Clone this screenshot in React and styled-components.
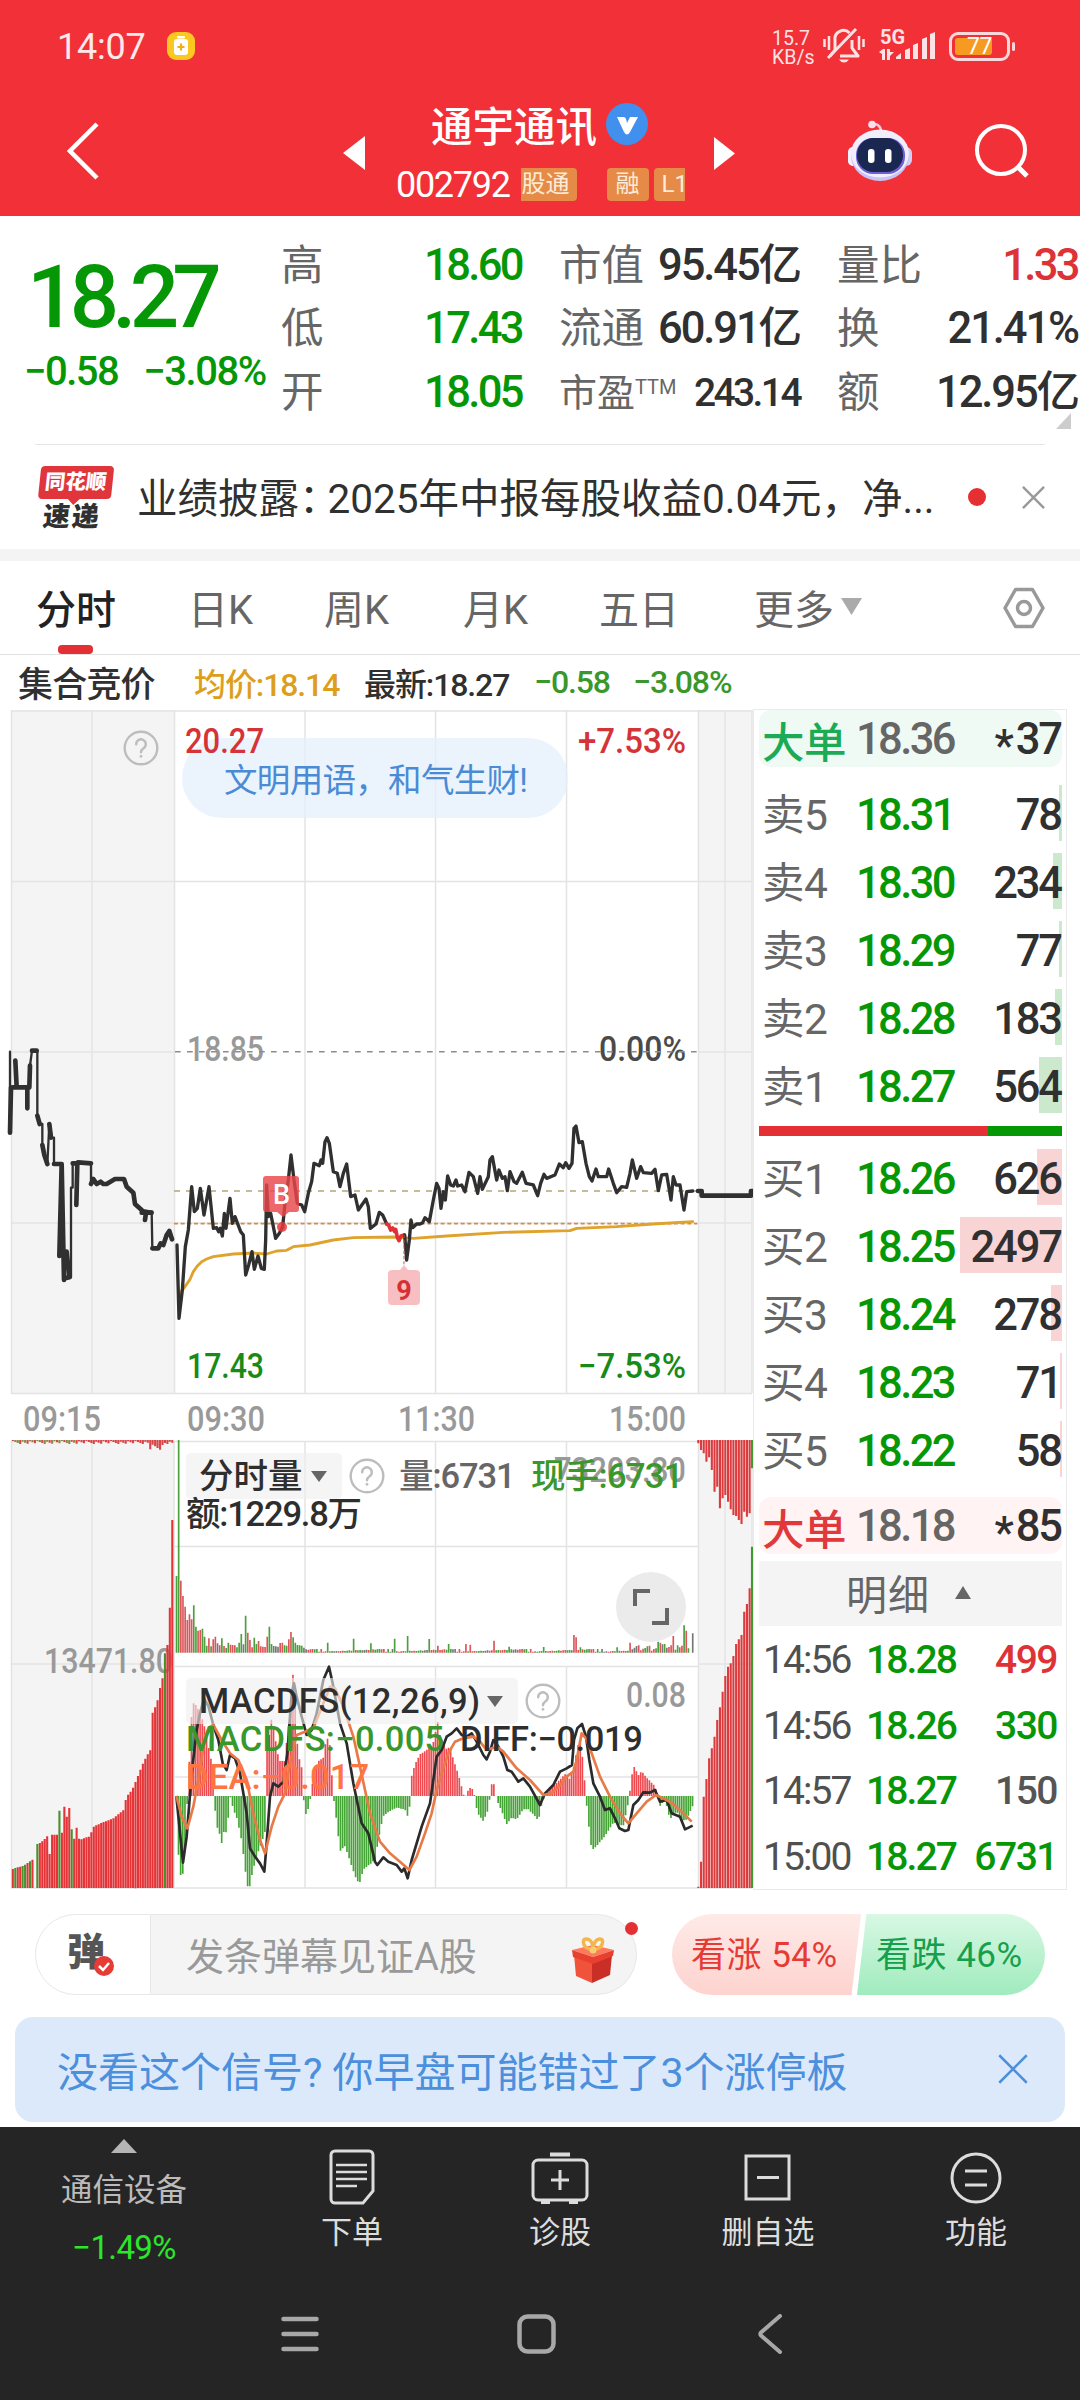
import React from "react";
import styled, { createGlobalStyle } from "styled-components";

const GREEN = "#069706";
const RED = "#dd3236";

const GlobalStyle = createGlobalStyle`
  body {
    margin: 0;
    background-color: white;
  }
  * {
    box-sizing: border-box;
  }
  svg {
    display: block;
    flex-shrink: 0;
  }
`;

/* ---------- data ---------- */

const quotes = [
  [
    { label: "高", value: "18.60", color: GREEN },
    { label: "低", value: "17.43", color: GREEN },
    { label: "开", value: "18.05", color: GREEN },
  ],
  [
    { label: "市值", value: "95.45亿" },
    { label: "流通", value: "60.91亿" },
    { label: "市盈", sup: "TTM", value: "243.14" },
  ],
  [
    { label: "量比", value: "1.33", color: RED },
    { label: "换", value: "21.41%" },
    { label: "额", value: "12.95亿" },
  ],
];

const sells = [
  { label: "卖5", price: "18.31", qty: "78", bar: 3 },
  { label: "卖4", price: "18.30", qty: "234", bar: 9 },
  { label: "卖3", price: "18.29", qty: "77", bar: 3 },
  { label: "卖2", price: "18.28", qty: "183", bar: 7 },
  { label: "卖1", price: "18.27", qty: "564", bar: 23 },
];

const buys = [
  { label: "买1", price: "18.26", qty: "626", bar: 25 },
  { label: "买2", price: "18.25", qty: "2497", bar: 102 },
  { label: "买3", price: "18.24", qty: "278", bar: 11 },
  { label: "买4", price: "18.23", qty: "71", bar: 2 },
  { label: "买5", price: "18.22", qty: "58", bar: 2 },
];

const deals = [
  { time: "14:56", price: "18.28", qty: "499", color: RED },
  { time: "14:56", price: "18.26", qty: "330", color: GREEN },
  { time: "14:57", price: "18.27", qty: "150", color: "#555" },
  { time: "15:00", price: "18.27", qty: "6731", color: GREEN },
];

// chart series are kept in thirds of a pixel
const auctionThin =
  "M30 155V398M38 262H82M88 262L90 197L96 152H112V347L119 372H127V435L133 465L142 492L148 372L156 413H162V492H185M213 832V563H218V490H232M273 490V552M372 537L380 560L400 578L405 612L425 630L455 635L457 745";
const auctionThick =
  "M33 262L30 398M38 262H82V325M46 182L50 262M88 262L90 197M96 152H110M112 347L119 372M127 435L133 465L142 492M148 372L153 413M162 492H185L178 768M185 492L192 840M200 755L208 832L196 835M218 490H232L229 615M234 487L273 490M273 552L280 537L290 552L302 545L310 552H320L345 537H372L380 560L400 578L405 612L425 630M425 638H455M435 660L438 638M457 745H475L482 730L490 735L500 705L508 693L516 718";
const priceMorning =
  "531,735 537,955 547,870 556,740 565,690 575,560 583,635 592,625 601,565 612,645 627,560 640,685 650,683 656,695 661,685 667,708 673,640 678,685 690,595 697,670 705,650 722,695 730,705 737,825 746,795 756,755 763,808 774,768 784,805 793,808 797,720 800,555 805,650 812,640 827,715 838,700 848,680 855,610 865,540 873,465 882,540 892,610 905,615 914,635 925,580 935,545 942,490 958,497 963,480 968,490 975,425 981,413 988,430 1000,515 1012,520 1020,560 1030,520 1040,492 1052,590 1065,585 1075,630 1098,597 1105,620 1111,685 1128,672 1138,637 1148,645 1160,672";
const priceDrop = "1160,672 1166,676 1172,690 1178,684 1184,695 1187,688 1192,712 1197,722 1203,708 1212,705";
const priceAfternoon =
  "1214,705 1220,780 1228,720 1233,660 1238,683 1250,672 1260,672 1268,668 1275,653 1288,665 1300,600 1310,550 1317,565 1323,625 1330,575 1336,600 1343,528 1352,555 1360,558 1368,540 1373,558 1385,555 1395,575 1407,517 1420,530 1433,580 1440,530 1447,568 1465,530 1470,480 1477,470 1490,540 1497,510 1507,535 1515,530 1522,572 1530,515 1542,545 1550,550 1567,517 1578,550 1600,555 1613,587 1622,550 1632,523 1640,535 1665,525 1678,492 1690,503 1697,488 1707,505 1716,490 1722,385 1728,378 1737,428 1747,425 1758,490 1768,530 1776,543 1788,507 1795,530 1820,530 1826,507 1840,550 1850,578 1865,560 1880,562 1890,520 1897,480 1910,535 1922,500 1930,518 1955,520 1965,508 1975,572 1985,525 2000,523 2013,600 2020,530 2028,555 2040,555 2052,630 2060,575 2078,573";
const average =
  "540,880 555,860 570,838 580,815 592,798 605,785 620,777 640,770 700,762 760,759 800,762 830,753 860,751 880,740 930,735 1000,720 1060,713 1180,711 1240,715 1340,708 1510,697 1710,692 1730,685 1850,680 1960,672 2078,665";
const diffLine =
  "529,1128 549,1328 560,1250 575,1060 590,930 600,880 612,835 625,858 640,915 655,960 668,1030 680,1050 690,1005 705,1015 720,1060 740,1180 750,1285 765,1310 780,1330 793,1355 800,1270 810,1130 820,1090 835,1100 850,1085 862,1000 875,820 882,790 890,830 905,890 920,945 935,930 950,880 970,780 987,740 998,790 1020,910 1040,970 1060,1090 1085,1210 1105,1240 1125,1325 1132,1335 1150,1312 1165,1325 1190,1335 1205,1355 1213,1345 1223,1375 1235,1320 1265,1220 1290,1150 1310,1010 1325,990 1340,950 1355,940 1370,925 1385,945 1400,950 1415,940 1430,965 1450,1005 1460,1018 1470,995 1480,960 1495,980 1510,1010 1522,1050 1535,1055 1555,1085 1570,1075 1590,1100 1620,1155 1635,1120 1660,1095 1680,1055 1700,1045 1716,1035 1722,960 1732,925 1746,912 1758,950 1768,1020 1780,1090 1800,1130 1815,1170 1830,1165 1845,1195 1858,1225 1875,1233 1885,1230 1900,1155 1915,1140 1930,1117 1950,1118 1965,1110 1980,1145 2000,1140 2015,1180 2040,1190 2055,1228 2078,1217";
const deaLine =
  "529,1128 545,1190 562,1225 580,1160 600,1050 615,950 627,922 640,915 665,960 690,1000 715,1020 740,1080 760,1180 780,1260 795,1300 815,1220 835,1160 855,1120 870,1030 890,945 915,935 940,925 970,850 990,800 1005,805 1030,860 1060,950 1080,1040 1110,1180 1140,1265 1170,1300 1200,1325 1228,1350 1250,1310 1275,1240 1295,1180 1310,1110 1325,1060 1345,1000 1365,965 1390,955 1420,950 1440,965 1460,990 1490,980 1510,995 1550,1045 1590,1080 1630,1125 1655,1120 1680,1095 1700,1070 1720,1055 1730,1020 1745,940 1758,955 1775,1000 1800,1070 1830,1130 1860,1180 1885,1210 1910,1180 1940,1145 1968,1125 2000,1140 2020,1152 2045,1175 2075,1205";

const macd = [
  [529, 0], [536, -190], [543, -245], [550, -230], [556, -150], [562, -10], [568, 105], [575, 250], [582, 283],
  [600, 250], [612, 215], [625, 150], [635, 100], [640, 30], [642, -5], [650, -90], [658, -110], [666, -145],
  [672, -105], [680, -110], [686, -50], [690, 0], [700, -40], [712, -70], [725, -135], [738, -240], [744, -278],
  [750, -270], [758, -225], [770, -180], [785, -140], [797, -100], [799, 0], [800, 130], [815, 235], [822, 200],
  [832, 130], [840, 105], [855, 105], [862, 190], [870, 230], [879, 365], [886, 300], [893, 130], [905, 85],
  [907, 0], [912, -15], [918, -55], [926, -35], [932, -2], [936, 30], [945, 80], [955, 105], [970, 115],
  [980, 180], [990, 150], [995, 70], [1000, 0], [1008, -60], [1020, -165], [1035, -150], [1050, -195],
  [1065, -240], [1078, -265], [1090, -220], [1110, -205], [1125, -190], [1140, -105], [1150, -60], [1170, -45],
  [1190, -35], [1215, -40], [1222, -60], [1228, -45], [1231, 0], [1235, 60], [1245, 95], [1260, 125],
  [1275, 135], [1290, 145], [1305, 170], [1310, 240], [1320, 180], [1340, 140], [1350, 150], [1360, 110],
  [1375, 65], [1388, 15], [1393, -5], [1400, 5], [1407, 25], [1418, 20], [1424, 0], [1432, -50], [1450, -75],
  [1465, -40], [1470, 0], [1478, 55], [1485, 15], [1490, -10], [1505, -45], [1520, -85], [1535, -65],
  [1550, -70], [1570, -40], [1585, -40], [1605, -60], [1615, -75], [1625, -25], [1634, 0], [1650, 20],
  [1665, 35], [1680, 50], [1695, 65], [1710, 50], [1722, 90], [1733, 150], [1740, 165], [1750, 100],
  [1757, 0], [1762, -45], [1772, -145], [1780, -160], [1790, -150], [1815, -120], [1840, -80], [1870, -90],
  [1885, -20], [1889, 10], [1897, 70], [1903, 88], [1915, 62], [1925, 75], [1940, 55], [1965, 30], [1973, 0],
  [1980, -30], [1995, -10], [2010, -70], [2030, -45], [2045, -75], [2060, -70], [2078, -30],
];

const volumePeaks = {
  0: "g230", 1: "g638", 2: "r216", 3: "r170", 4: "r138", 5: "r98", 6: "r115", 7: "r100", 8: "g142", 9: "g78",
  10: "r66", 11: "r68", 12: "g72", 13: "g48", 15: "r43", 17: "r40", 18: "r48", 21: "g43", 29: "g30", 30: "g56",
  32: "g111", 33: "r60", 34: "r38", 36: "g45", 38: "r35", 42: "r48", 43: "g78", 49: "r30", 52: "r40", 53: "r62",
  54: "g46", 55: "g30", 70: "g30", 82: "g42", 90: "g28", 101: "g42", 107: "g50", 117: "g41", 121: "r21",
  126: "g26", 134: "r26", 136: "r24", 147: "r36", 154: "g18", 170: "g17", 184: "r53", 185: "r46", 187: "g16",
  204: "g16", 210: "r30", 223: "g33", 224: "r30", 226: "g26", 230: "r50", 232: "g22", 235: "g82", 236: "r66",
  239: "k58",
};

const auctionTotals = [
  [36, 1347], [70, 1337], [98, 1318], [101, 1404], [107, 1404], [111, 1272], [122, 1268], [130, 1260],
  [141, 1248], [148, 1303], [155, 1244], [170, 1244], [177, 1168], [184, 1245], [192, 1160], [200, 1192],
  [207, 1163], [214, 1227], [222, 1258], [229, 1222], [237, 1260], [270, 1248], [277, 1222], [300, 1210],
  [340, 1195], [370, 1170], [378, 1130], [395, 1110], [410, 1075], [430, 1025], [450, 990], [457, 878],
  [470, 850], [478, 808], [486, 780], [493, 703], [501, 677], [508, 582], [516, 296],
];

const closingTop = [10, 30, 40, 65, 52, 90, 155, 140, 205, 175, 165, 185, 208, 225, 228, 240, 252, 215, 230, 220];
const closingTotals = [
  1400, 1325, 1130, 1077, 1015, 985, 950, 900, 862, 815, 768, 740, 730, 708, 672, 658, 645, 575, 552, 505,
];

const interp = (points, x) => {
  for (let i = 1; i < points.length; i++) {
    if (x <= points[i][0]) {
      const [x0, y0] = points[i - 1];
      const [x1, y1] = points[i];
      return y0 + ((x - x0) / (x1 - x0)) * (y1 - y0);
    }
  }
  return points[points.length - 1][1];
};

const barPath = (bars) => bars.map(([x, y, h]) => `M${x} ${y}v${h}`).join("");

const volumeBars = { r: [], g: [], k: [] };
for (let i = 0; i < 240; i++) {
  if (i === 238) continue;
  const x = (529.5 + i * 6.48).toFixed(1);
  const noise = (i * 7919) % 97;
  let color = noise % 5 < 2 ? "r" : noise % 5 < 4 ? "g" : "k";
  let h = i < 60 ? 14 + (noise % 17) : i > 210 ? 6 + (noise % 20) : 3 + (noise % 9);
  if (volumePeaks[i]) {
    color = volumePeaks[i][0];
    h = Number(volumePeaks[i].slice(1));
  }
  volumeBars[color].push([x, 698 - h, h]);
}

const macdBars = { up: [], down: [] };
for (let x = 529; x < 2080; x += 6.48) {
  const v = interp(macd, x);
  if (v >= 0) macdBars.up.push([x.toFixed(1), (1128 - v).toFixed(0), v.toFixed(0)]);
  else macdBars.down.push([x.toFixed(1), 1128, (-v).toFixed(0)]);
}

const auctionBars = { r: [], g: [] };
const auctionTop = { r: [], g: [] };
for (let i = 0; i < 66; i++) {
  const x = 38.5 + i * 7.36;
  const y = interp(auctionTotals, x - 1);
  const green = [1, 4, 5, 7, 10, 19, 24, 62].includes(i);
  auctionBars[green ? "g" : "r"].push([x.toFixed(1), y.toFixed(0), (1404 - y).toFixed(0)]);
  const drop = i > 55 && i < 62 ? 14 + ((i * 5) % 19) : 3 + ((i * 13) % 10);
  auctionTop[i < 26 && i % 3 ? "g" : "r"].push([x.toFixed(1), 60, drop]);
}
const closingBars = closingTotals.map((y, i) => [2095 + i * 8.1, y, 1404 - y]);
const closingTopBars = closingTop.map((h, i) => [2095 + i * 8.1, 60, h]);

/* ---------- drawings ---------- */

const Help = () => (
  <svg width="36" height="36" viewBox="0 0 36 36" fill="none" stroke="#bdbdbd" strokeWidth="2.4">
    <circle cx="18" cy="18" r="16.3" />
    <path d="M13.2 14.2a4.8 4.8 0 1 1 7.4 4c-1.700 1.100-2.600 2-2.600 4" strokeLinecap="round" />
    <circle cx="18" cy="26.300" r="1" fill="#bdbdbd" strokeWidth="1" />
  </svg>
);

const Cross = ({ size, color, width = 2.5 }) => (
  <svg width={size} height={size} viewBox="0 0 24 24" stroke={color} strokeWidth={width}>
    <path d="M1 1l22 22M23 1L1 23" />
  </svg>
);

const StatusIcons = () => (
  <>
    <svg width="42" height="38" viewBox="0 0 42 38" fill="none" stroke="#fde3e4" strokeWidth="3">
      <path d="M7 29l5-6v-10a8.500 8.500 0 0 1 14.500-7M29 13v8l6 8H17" strokeLinejoin="round" />
      <path d="M5 31L33 2" />
      <path d="M1.500 12v8M6 9v14M36 9v14M40.500 12v8" strokeWidth="2.500" />
      <path d="M16 32.500h10q-2 3-5 3t-5-3z" fill="#fde3e4" stroke="none" />
    </svg>
    <Signal>
      <b>5G</b>
      <svg width="59" height="30" viewBox="0 0 59 30" fill="#fde3e4">
        <path d="M0 21l4-3h2v11h-3v-6zM8 18h3v3h4l-4 4v4H8z" />
        <path d="M17 26l5-4v6h-5zM26 19l5-2v11h-5zM34 14l5-2v16h-5zM43 8l5-2v22h-5zM51 3l5-2v27h-5z" />
      </svg>
    </Signal>
    <Battery>
      <span>77</span>
    </Battery>
  </>
);

const Robot = () => (
  <svg width="66" height="62" viewBox="0 0 66 62">
    <path d="M25 5c5-2 9 1 9 7" fill="none" stroke="#f6c9dc" strokeWidth="2.500" />
    <circle cx="25" cy="4.500" r="3.800" fill="#fbdfea" />
    <rect x="1" y="27" width="64" height="19" rx="6" fill="#d3cdf3" />
    <rect x="1" y="27" width="10" height="19" rx="5" fill="#f4effc" />
    <ellipse cx="33" cy="36" rx="29" ry="25" fill="#c9c3f3" />
    <ellipse cx="33" cy="33.500" rx="29" ry="24" fill="#f0edfd" />
    <rect x="9" y="18" width="49" height="36" rx="17" fill="#6f5fd0" />
    <rect x="10" y="18" width="46" height="34" rx="16.500" fill="#1a2750" />
    <rect x="21" y="29" width="6.500" height="14" rx="3" fill="#fff" />
    <rect x="38" y="29" width="6.500" height="14" rx="3" fill="#fff" />
  </svg>
);

const Gift = () => (
  <svg width="46" height="48" viewBox="0 0 46 48">
    <path d="M4 19l18 7v21L6 40z" fill="#f0523c" />
    <path d="M42 19l-20 7v21l18-8z" fill="#c92f26" />
    <path d="M2 14L23 9l21 5-21 7z" fill="#ff7a5c" />
    <path d="M2 14l21 7v7L3 21zM44 14l-21 7v7l20-8z" fill="#e8402f" />
    <path d="M23 13C13 14 11 3 16 3c5 0 7 5 7 10 0-5 3-10 7-10 5 0 3 11-7 10z" fill="none" stroke="#f2b64a" strokeWidth="3.500" />
    <circle cx="23" cy="14" r="3.500" fill="#f7cd71" />
  </svg>
);

const actions = [
  {
    label: "下单",
    icon: (
      <g>
        <path d="M8 3h34a4 4 0 0 1 4 4v36l-10 12H8a4 4 0 0 1-4-4V7a4 4 0 0 1 4-4z" />
        <path d="M9 17h31M9 24h31M9 31h31M9 38h21" strokeWidth="2.500" />
      </g>
    ),
  },
  {
    label: "诊股",
    icon: (
      <g>
        <rect x="-2" y="12" width="54" height="40" rx="5" />
        <path d="M25 22v20M16 32h18" />
        <path d="M15 6.500h20M6 54h9M34 54h9" strokeWidth="4" />
      </g>
    ),
  },
  {
    label: "删自选",
    icon: (
      <g>
        <rect x="3" y="8" width="43" height="43" />
        <path d="M14 29.500h22" />
      </g>
    ),
  },
  {
    label: "功能",
    icon: (
      <g>
        <circle cx="25" cy="30" r="24" />
        <path d="M14 23h22M14 37h22" />
      </g>
    ),
  },
];

const Label = ({ x, y, w, color, end, children }) => (
  <text
    x={x}
    y={y}
    fill={color}
    textLength={w}
    lengthAdjust="spacingAndGlyphs"
    textAnchor={end ? "end" : "start"}
    fontSize="35"
    fontWeight="500"
  >
    {children}
  </text>
);

const StockChart = () => (
  <ChartSvg width="753" height="1180" viewBox="0 0 753 1180">
    {/* call auction and closing zones */}
    <g fill="#f4f4f4">
      <rect x="11" y="0" width="164" height="683" />
      <rect x="698" y="0" width="54" height="683" />
      <rect x="11" y="731" width="164" height="447" />
      <rect x="698" y="731" width="54" height="447" />
    </g>
    <g stroke="#e3e3e3" strokeWidth="1.500" fill="none">
      <path d="M11 1H752M11 171.500H752M11 342H175M698 342H752M11 513H752M11 683.500H752" />
      <path d="M11.500 0V683M92 0V683M174.500 0V683M305 0V683M435.500 0V683M566.500 0V683M698.500 0V683M725 0V683M752 0V683" />
      <path d="M11 731.500H752M175 836.500H698M11 954H175M698 954H752M175 956.500H698M175 1067H698M11 1178H752" />
      <path d="M11.500 731V1178M92 731V1178M174 731V1178M305 731V944M305 956V1178M435.500 731V944M435.500 956V1178M566.500 731V944M566.500 956V1178M698.500 731V1178M725 731V1178M752 731V1178" />
    </g>

    <ChartPill>
      <rect x="182" y="28" width="386" height="80" rx="40" />
      <text x="224" y="82" textLength="304">
        文明用语，和气生财!
      </text>
    </ChartPill>
    <Label x={185} y={43} w={79} color="#d43438">20.27</Label>
    <Label x={686} y={43} w={108} color="#d43438" end>+7.53%</Label>
    <Label x={187} y={351} w={77} color="#999">18.85</Label>
    <Label x={686} y={351} w={87} color="#4a4a4a" end>0.00%</Label>
    <Label x={187} y={668} w={77} color="#178a17">17.43</Label>
    <Label x={686} y={668} w={108} color="#178a17" end>−7.53%</Label>
    <Label x={23} y={721} w={78} color="#999">09:15</Label>
    <Label x={187} y={721} w={78} color="#999">09:30</Label>
    <Label x={398} y={721} w={77} color="#999">11:30</Label>
    <Label x={686} y={721} w={77} color="#999" end>15:00</Label>

    {/* price */}
    <g transform="translate(0 290) scale(.33333)" fill="none" strokeLinejoin="round" strokeLinecap="round">
      <path d="M525 155.500H2092" stroke="#8c8c8c" strokeWidth="4.500" strokeDasharray="17 19" strokeLinecap="butt" />
      <path d="M522 573H2092" stroke="#b5a779" strokeWidth="4.500" strokeDasharray="18 18" strokeLinecap="butt" />
      <path d="M522 671H2092" stroke="#d08f50" strokeWidth="5" strokeDasharray="12 8" strokeLinecap="butt" />
      <polyline points={average} stroke="#dfa22c" strokeWidth="8.500" />
      <path d={auctionThin} stroke="#303030" strokeWidth="7" />
      <path d={auctionThick} stroke="#303030" strokeWidth="14" />
      <polyline points={priceMorning} stroke="#303030" strokeWidth="10" />
      <polyline points={priceDrop} stroke="#e03236" strokeWidth="11" />
      <polyline points={priceAfternoon} stroke="#303030" strokeWidth="10" />
      <path d="M2094 573H2105V587H2253V573H2257" stroke="#303030" strokeWidth="14" />
      <path d="M1212 705V792" stroke="#b55" strokeWidth="3" strokeDasharray="8 8" />
    </g>
    <g>
      <path d="M266 466H296a3 3 0 0 1 3 3V499a3 3 0 0 1-3 3H289l-6 5-6-5H266a3 3 0 0 1-3-3V469a3 3 0 0 1 3-3z" fill="#e8474a" fillOpacity=".82" />
      <circle cx="282" cy="517" r="5" fill="#e8383c" fillOpacity=".85" />
      <text x="281.500" y="494" textAnchor="middle" fontSize="27" fontWeight="500" fill="#fff">B</text>
      <path d="M392 560h8l4-5 4 5h8a4 4 0 0 1 4 4v27a4 4 0 0 1-4 4h-24a4 4 0 0 1-4-4v-27a4 4 0 0 1 4-4z" fill="#f7bfc1" />
      <text x="404" y="590" textAnchor="middle" fontSize="27" fontWeight="700" fill="#d62f34">9</text>
    </g>

    {/* volume and MACD */}
    <Label x={173} y={963} w={129} color="#999" end>13471.80</Label>
    <Label x={686} y={772} w={132} color="#999" end>73203.80</Label>
    <Label x={686} y={997} w={60} color="#999" end>0.08</Label>
    <g transform="translate(0 710) scale(.33333)" fill="none" strokeWidth="5">
      <path d={barPath(volumeBars.r)} stroke="#dc555a" />
      <path d={barPath(volumeBars.g)} stroke="#4b9f3c" />
      <path d={barPath(volumeBars.k)} stroke="#777" />
      <path d={barPath(macdBars.up)} stroke="#ee4a50" />
      <path d={barPath(macdBars.down)} stroke="#45a436" />
      <g strokeWidth="6.300">
        <path d={barPath(auctionBars.r)} stroke="#e53437" />
        <path d={barPath(auctionBars.g)} stroke="#4b8f2c" />
        <path d={barPath(auctionTop.r)} stroke="#d94548" />
        <path d={barPath(auctionTop.g)} stroke="#8a8a4a" />
        <path d={barPath(closingBars)} stroke="#dc3a3d" />
        <path d={barPath(closingTopBars)} stroke="#dc3a3d" />
        <path d="M2256 60V145M2256 380V1404" stroke="#3d9a2c" />
      </g>
      <g strokeWidth="8" strokeLinejoin="round">
        <polyline points={diffLine} stroke="#2b2b2b" />
        <polyline points={deaLine} stroke="#e87a48" />
      </g>
    </g>
  </ChartSvg>
);

/* ---------- page ---------- */

const BookRow = ({ item, side }) => (
  <LevelRow>
    <DepthBar $side={side} style={{ width: item.bar }} />
    <span className="name">{item.label}</span>
    <span className="price">{item.price}</span>
    <span className="qty">{item.qty}</span>
  </LevelRow>
);

const App = () => {
  return (
    <Page>
      <GlobalStyle />
      <Header>
        <StatusBar>
          <Clock>14:07</Clock>
          <svg width="28" height="28" viewBox="0 0 28 28">
            <rect width="28" height="28" rx="9" fill="#fbc822" />
            <rect x="7" y="7" width="14" height="16" rx="3" fill="#fff" />
            <rect x="10" y="4" width="8" height="2.500" rx="1" fill="#fff" />
            <path d="M14 11.500v7M10.500 15h7" stroke="#f4ab18" strokeWidth="2.200" />
          </svg>
          <NetSpeed>
            <span>15.7</span>
            <span>KB/s</span>
          </NetSpeed>
          <StatusIcons />
        </StatusBar>
        <TitleBar>
          <svg width="32" height="58" viewBox="0 0 32 58" fill="none" stroke="#fff" strokeWidth="4.500">
            <path d="M30 2L3 29l27 27" />
          </svg>
          <svg className="prev" width="22" height="34" viewBox="0 0 22 34" fill="#fff">
            <path d="M22 0v34L0 17z" />
          </svg>
          <StockTitle>
            <div className="name">
              通宇通讯
              <svg width="42" height="42" viewBox="0 0 42 42">
                <circle cx="21" cy="21" r="21" fill="#4290ee" />
                <path d="M11 14h7q2 0 3 6l3-6h8l-8 15q-3 5-6 0z" fill="#fff" />
              </svg>
            </div>
            <div className="code">
              002792
              <Tags>
                <span className="cut">股通</span>
                <span className="margin">融</span>
                <span className="level">L1</span>
              </Tags>
            </div>
          </StockTitle>
          <svg className="next" width="21" height="33" viewBox="0 0 21 33" fill="#fff">
            <path d="M0 0v33l21-16.500z" />
          </svg>
          <Robot />
          <svg className="search" width="56" height="56" viewBox="0 0 56 56" fill="none" stroke="#fff" strokeWidth="4">
            <circle cx="27" cy="27" r="24" />
            <path d="M43 43l10 10" strokeWidth="5" />
          </svg>
        </TitleBar>
      </Header>

      <QuotePanel>
        <LastPrice>
          <strong>18.27</strong>
          <div>
            <span>−0.58</span>
            <span>−3.08%</span>
          </div>
        </LastPrice>
        {quotes.map((column, i) => (
          <QuoteColumn key={i}>
            {column.map((q) => (
              <QuoteCell key={q.label} $color={q.color} $small={!!q.sup}>
                <label>
                  {q.label}
                  {q.sup && <sup>{q.sup}</sup>}
                </label>
                <span>{q.value}</span>
              </QuoteCell>
            ))}
          </QuoteColumn>
        ))}
        <Corner />
      </QuotePanel>

      <News>
        <NewsLogo>
          <span className="bubble">同花顺</span>
          <span className="word">速递</span>
        </NewsLogo>
        <p>
          业绩披露<Colon>：</Colon>2025年中报每股收益0.04元，净...
        </p>
        <Dot $size={18} />
        <Cross size={23} color="#999" />
      </News>

      <Tabs>
        <Tab $active>分时</Tab>
        <Tab>日K</Tab>
        <Tab>周K</Tab>
        <Tab>月K</Tab>
        <Tab>五日</Tab>
        <Tab>
          更多
          <svg width="21" height="17" viewBox="0 0 21 17" fill="#aaa">
            <path d="M0 0h21L10.500 17z" />
          </svg>
        </Tab>
        <svg className="settings" width="42" height="42" viewBox="0 0 42 42" fill="none" stroke="#999" strokeWidth="3.500">
          <path d="M12.500 2.500h17L40 21 29.500 39.500h-17L2 21z" strokeLinejoin="round" />
          <circle cx="21" cy="21" r="6.500" />
        </svg>
      </Tabs>

      <Legend>
        <b>集合竞价</b>
        <span className="avg">均价:18.14</span>
        <span className="last">最新:18.27</span>
        <span className="diff">−0.58</span>
        <span className="pct">−3.08%</span>
      </Legend>

      <Market>
        <ChartArea>
          <StockChart />
          <AuctionHelp>
            <Help />
          </AuctionHelp>
          <Readout $top={743}>
            <PaneSelect $width={156}>
              分时量
              <Caret />
            </PaneSelect>
            <Help />
            <span className="volume">量:6731</span>
            <span className="hand">现手:6731</span>
          </Readout>
          <Readout $top={781}>
            <span className="amount">额:1229.8万</span>
          </Readout>
          <Readout $top={968}>
            <PaneSelect $width={332}>
              <em>MACDFS(12,26,9)</em>
              <Caret />
            </PaneSelect>
            <Help />
          </Readout>
          <Readout $top={1006}>
            <span className="macd">MACDFS:−0.005</span>
            <span className="dif">DIFF:−0.019</span>
          </Readout>
          <Readout $top={1044}>
            <span className="dea">DEA:−0.017</span>
          </Readout>
          <Expand>
            <svg width="36" height="36" viewBox="0 0 36 36" fill="none" stroke="#666" strokeWidth="4">
              <path d="M2 17V2h15M34 19v15H19" />
            </svg>
          </Expand>
        </ChartArea>

        <Book>
          <BigOrder $side="sell">
            <span className="name">大单</span>
            <span className="price">18.36</span>
            <span className="qty">
              <Star>*</Star>37
            </span>
          </BigOrder>
          <Levels>
            {sells.map((s) => (
              <BookRow key={s.label} item={s} side="sell" />
            ))}
          </Levels>
          <Ratio />
          <Levels $below>
            {buys.map((b) => (
              <BookRow key={b.label} item={b} side="buy" />
            ))}
          </Levels>
          <BigOrder $side="buy">
            <span className="name">大单</span>
            <span className="price">18.18</span>
            <span className="qty">
              <Star>*</Star>85
            </span>
          </BigOrder>
          <DetailHead>
            明细
            <svg width="16" height="13" viewBox="0 0 16 13" fill="#666">
              <path d="M0 13L8 0l8 13z" />
            </svg>
          </DetailHead>
          {deals.map((d, i) => (
            <Deal key={i} $color={d.color}>
              <span className="time">{d.time}</span>
              <span className="price">{d.price}</span>
              <span className="qty">{d.qty}</span>
            </Deal>
          ))}
        </Book>
      </Market>

      <Social>
        <Barrage>
          <BarrageSwitch>
            弹
            <svg width="20" height="20" viewBox="0 0 20 20">
              <circle cx="10" cy="10" r="10" fill="#e63c35" />
              <path d="M5 10l4 4 6-7" fill="none" stroke="#fff" strokeWidth="2.500" />
            </svg>
          </BarrageSwitch>
          <BarrageInput>
            发条弹幕见证A股
            <Gift />
          </BarrageInput>
          <Dot $size={13} $badge />
        </Barrage>
        <Vote>
          <VoteSide $up>看涨 54%</VoteSide>
          <VoteSide>看跌 46%</VoteSide>
        </Vote>
      </Social>

      <Banner>
        <span>没看这个信号? 你早盘可能错过了3个涨停板</span>
        <Cross size={30} color="#4b8fdd" width={2} />
      </Banner>

      <Footer>
        <Actions>
          <Sector>
            <svg width="26" height="14" viewBox="0 0 26 14" fill="#b5b5b5">
              <path d="M0 14L13 0l13 14z" />
            </svg>
            <span>通信设备</span>
            <b>−1.49%</b>
          </Sector>
          {actions.map((a) => (
            <Action key={a.label}>
              <svg width="60" height="60" viewBox="-5 0 60 60" fill="none" stroke="#dcdcdc" strokeWidth="3">
                {a.icon}
              </svg>
              {a.label}
            </Action>
          ))}
        </Actions>
        <SystemNav>
          <svg width="38" height="36" viewBox="0 0 38 36" stroke="#a8a8a8" strokeWidth="4.500" strokeLinecap="round">
            <path d="M2.500 3h33M2.500 18h33M2.500 33h33" />
          </svg>
          <svg width="39" height="40" viewBox="0 0 39 40" fill="none" stroke="#a8a8a8" strokeWidth="4.500">
            <rect x="2.500" y="2.500" width="34" height="35" rx="8" />
          </svg>
          <svg width="26" height="40" viewBox="0 0 26 40" fill="none" stroke="#a8a8a8" strokeWidth="4" strokeLinecap="round" strokeLinejoin="round">
            <path d="M23 2L4 18.500q-1.500 1.500 0 3L23 38" />
          </svg>
        </SystemNav>
      </Footer>
    </Page>
  );
};

export default App;

const Page = styled.div`
  width: 1080px;
  height: 2400px;
  display: flex;
  flex-direction: column;
  overflow: hidden;
  background-color: white;
  color: #303030;
  font-family: Roboto, "Noto Sans CJK SC", sans-serif;
`;

const Header = styled.header`
  height: 216px;
  background-color: #f13037;
  color: white;
`;

const StatusBar = styled.div`
  display: flex;
  align-items: center;
  height: 92px;
  padding: 0 61px 0 57px;
`;

const Clock = styled.span`
  width: 110px;
  padding-top: 2px;
  font-size: 36px;
  letter-spacing: -0.2px;
  color: #fde9ea;
`;

const NetSpeed = styled.div`
  display: flex;
  flex-direction: column;
  width: 51px;
  margin-left: auto;
  padding-top: 3px;
  font-size: 19.5px;
  line-height: 19px;
  color: #fde3e4;
`;

const Signal = styled.div`
  position: relative;
  width: 75px;
  padding-left: 14px;
  b {
    position: absolute;
    top: -4px;
    left: 15px;
    font-size: 20px;
    line-height: 20px;
    font-weight: 700;
    color: #fde3e4;
  }
`;

const Battery = styled.div`
  position: relative;
  width: 61px;
  height: 29px;
  margin: 0 9px 0 9px;
  padding: 3px;
  border: 3px solid #fbd9da;
  border-radius: 9px;
  span {
    display: block;
    width: 37px;
    padding-left: 12px;
    border-radius: 3px;
    background-color: #f79a22;
    font-size: 23px;
    line-height: 17px;
    letter-spacing: -0.5px;
  }
  &::after {
    content: "";
    position: absolute;
    right: -8px;
    top: 7px;
    width: 3px;
    height: 9px;
    border-radius: 2px;
    background-color: #fbd9da;
  }
`;

const TitleBar = styled.div`
  display: flex;
  align-items: center;
  height: 124px;
  padding: 0 50px 6px 67px;
  .prev {
    margin: 4px 0 0 244px;
  }
  .next {
    margin: 4px 112px 0 2px;
  }
  .search {
    margin-left: 61px;
  }
`;

const StockTitle = styled.div`
  width: 349px;
  padding: 5px 0 0 31px;
  .name {
    display: flex;
    align-items: center;
    gap: 9px;
    height: 60px;
    padding-left: 35px;
    font-size: 41.5px;
    font-weight: 500;
  }
  .code {
    display: flex;
    align-items: center;
    height: 60px;
    padding-top: 2px;
    font-size: 36px;
    letter-spacing: -1.3px;
  }
`;

const Tags = styled.div`
  display: flex;
  width: 164px;
  margin-left: 11px;
  overflow: hidden;
  span {
    flex-shrink: 0;
    height: 33px;
    background-color: #e68b47;
    color: #fcebd8;
    border-radius: 4px;
    font-size: 24px;
    line-height: 33px;
    letter-spacing: 0;
  }
  .cut {
    width: 56px;
    padding-left: 1px;
    border-radius: 0 4px 4px 0;
  }
  .margin {
    width: 42px;
    margin: 0 5px 0 30px;
    text-align: center;
  }
  .level {
    width: 43px;
    padding-left: 8px;
  }
`;

const QuotePanel = styled.section`
  position: relative;
  display: flex;
  gap: 37px;
  height: 229px;
  padding-top: 18px;
  &::after {
    content: "";
    position: absolute;
    left: 35px;
    right: 35px;
    bottom: 0;
    height: 1px;
    background-color: #e6e6e6;
  }
`;

const LastPrice = styled.div`
  width: 244px;
  padding: 12px 0 0 24px;
  color: ${GREEN};
  white-space: nowrap;
  strong {
    display: block;
    height: 101px;
    padding-left: 3px;
    font-size: 87px;
    line-height: 102px;
    font-weight: 500;
    letter-spacing: -6.8px;
  }
  div {
    display: flex;
    gap: 25px;
    font-size: 40px;
    line-height: 46px;
    font-weight: 500;
    letter-spacing: -1.5px;
    padding-top: 2px;
  }
`;

const QuoteColumn = styled.div`
  width: 241px;
`;

const QuoteCell = styled.div`
  display: flex;
  justify-content: space-between;
  align-items: center;
  height: 63.5px;
  font-size: 42px;
  line-height: 60px;
  white-space: nowrap;
  label {
    color: #666;
    font-size: ${(p) => (p.$small ? 38 : 42.5)}px;
  }
  sup {
    font-size: 20px;
    line-height: 0;
    vertical-align: 12px;
  }
  span {
    color: ${(p) => p.$color || "#303030"};
    font-size: ${(p) => (p.$small ? 39 : 43.5)}px;
    font-weight: 500;
    letter-spacing: ${(p) => (p.$color || p.$small ? -2.6 : -2.1)}px;
  }
`;

const Corner = styled.i`
  position: absolute;
  right: 9px;
  bottom: 16px;
  border-left: 15px solid transparent;
  border-bottom: 16px solid #ccc;
`;

const News = styled.section`
  display: flex;
  align-items: center;
  height: 104px;
  padding: 0 34px 0 35px;
  p {
    width: 797px;
    margin: 0 34px 4px 24px;
    font-size: 40.5px;
    white-space: nowrap;
  }
  p + i {
    margin-right: 36px;
  }
`;

const Colon = styled.span`
  margin-right: -12px;
`;

const NewsLogo = styled.div`
  width: 78px;
  display: flex;
  flex-direction: column;
  align-items: center;
  transform: skewX(-6deg);
  font-weight: 900;
  .bubble {
    position: relative;
    width: 73px;
    height: 33px;
    border-radius: 4px;
    background-color: #e0363b;
    color: white;
    font-size: 20.5px;
    line-height: 32px;
    text-align: center;
  }
  .bubble::after {
    content: "";
    position: absolute;
    left: 30px;
    bottom: -6px;
    border: 6px solid transparent;
    border-top-color: #e0363b;
    border-bottom: 0;
  }
  .word {
    height: 30px;
    font-size: 27px;
    line-height: 37px;
    letter-spacing: 2px;
  }
`;

const Dot = styled.i`
  flex-shrink: 0;
  width: ${(p) => p.$size}px;
  height: ${(p) => p.$size}px;
  border-radius: 50%;
  background-color: #e53033;
  ${(p) => p.$badge && "position: absolute; right: -1px; top: 8px;"}
`;

const Tabs = styled.nav`
  display: grid;
  grid-template-columns: 152px 136px 139px 136px 155px 249px 42px;
  height: 106px;
  padding-left: 36px;
  border-top: 12px solid #f4f4f4;
  border-bottom: 1px solid #e2e2e2;
  .settings {
    margin-top: 26px;
  }
`;

const Tab = styled.div`
  position: relative;
  display: flex;
  align-items: center;
  gap: 7px;
  height: 93px;
  padding-bottom: 2px;
  font-size: 40px;
  color: ${(p) => (p.$active ? "#222" : "#666")};
  font-weight: ${(p) => (p.$active ? 500 : 400)};
  &::after {
    content: "";
    display: ${(p) => (p.$active ? "block" : "none")};
    position: absolute;
    left: 22px;
    bottom: 0;
    width: 35px;
    height: 9px;
    border-radius: 4px;
    background-color: #e23035;
  }
`;

const Legend = styled.div`
  display: grid;
  grid-template-columns: 176px 170px 170px 99px auto;
  align-items: center;
  height: 55px;
  padding: 0 0 2px 18px;
  font-size: 32px;
  font-weight: 500;
  letter-spacing: -1.1px;
  white-space: nowrap;
  b {
    font-size: 35px;
    font-weight: 500;
    letter-spacing: -0.8px;
  }
  .avg {
    color: #dd9f1b;
  }
  .diff,
  .pct {
    color: #3a972b;
  }
`;

const Market = styled.section`
  display: flex;
  height: 1180px;
`;

const ChartArea = styled.div`
  position: relative;
  width: 753px;
`;

const ChartSvg = styled.svg`
  font-family: Roboto, "Noto Sans CJK SC", sans-serif;
`;

const ChartPill = styled.g`
  rect {
    fill: #e4effc;
    fill-opacity: 0.75;
  }
  text {
    fill: #4a8bd6;
    font-size: 33.5px;
  }
`;

const AuctionHelp = styled.div`
  position: absolute;
  left: 123px;
  top: 20px;
`;

const Readout = styled.div`
  position: absolute;
  left: 186px;
  top: ${(p) => p.$top}px;
  display: flex;
  align-items: center;
  height: 46px;
  gap: 7px;
  font-size: 34.5px;
  font-weight: 500;
  letter-spacing: -1.1px;
  line-height: 40px;
  white-space: nowrap;
  color: #2e2e2e;
  .amount {
    letter-spacing: -1.2px;
  }
  .volume {
    margin-left: 7px;
    width: 125px;
    color: #666;
  }
  .hand {
    color: #3a972b;
    letter-spacing: -0.7px;
  }
  .macd {
    width: 267px;
    color: #3a972b;
    letter-spacing: 0.3px;
  }
  .dif {
    letter-spacing: -0.4px;
  }
  .dea {
    color: #ff7443;
    letter-spacing: 0.2px;
  }
`;

const PaneSelect = styled.div`
  display: flex;
  align-items: center;
  justify-content: space-between;
  width: ${(p) => p.$width}px;
  height: 46px;
  padding: 0 15px 0 13px;
  border-radius: 5px;
  background-color: rgba(238, 238, 238, 0.6);
  letter-spacing: 0;
  em {
    font-style: normal;
    letter-spacing: 0.4px;
  }
`;

const Caret = styled.i`
  border: 8px solid transparent;
  border-top: 11px solid #666;
  border-bottom: 0;
`;

const Expand = styled.div`
  position: absolute;
  left: 616px;
  top: 862px;
  display: flex;
  align-items: center;
  justify-content: center;
  width: 70px;
  height: 70px;
  border-radius: 50%;
  background-color: #ebebeb;
`;

const Book = styled.div`
  display: flex;
  flex-direction: column;
  width: 314px;
  height: 1181px;
  margin-top: -1px;
  padding: 0 4px 0 5px;
  border: 1px solid #eaeaea;
  font-size: 43.5px;
  letter-spacing: -2.6px;
  .name {
    width: 97px;
    padding-left: 3px;
    color: #666;
    font-size: 42.5px;
    letter-spacing: -0.5px;
  }
  .price {
    color: ${GREEN};
    font-weight: 500;
  }
  .qty {
    margin-left: auto;
    font-weight: 500;
    letter-spacing: -2.1px;
  }
`;

const Star = styled.i`
  position: relative;
  top: 7px;
  margin-right: 4px;
  font-style: normal;
`;

const BigOrder = styled.div`
  display: flex;
  align-items: center;
  flex-shrink: 0;
  height: 57px;
  padding: 2px 1px 0 0;
  border-radius: 12px;
  background-color: ${(p) => (p.$side === "sell" ? "#f0faf5" : "#fff3f3")};
  && .name {
    color: ${(p) => (p.$side === "sell" ? "#1cab55" : "#e0383b")};
    font-weight: 500;
  }
  && .price {
    color: #666;
  }
`;

const Levels = styled.div`
  padding: ${(p) => (p.$below ? "7px 0 14px" : "12px 0 7px")};
`;

const LevelRow = styled.div`
  position: relative;
  display: flex;
  align-items: center;
  height: 68px;
  padding: 5px 1px 0 0;
  line-height: 60px;
  span {
    position: relative;
  }
`;

const DepthBar = styled.div`
  position: absolute;
  right: 0;
  top: 6px;
  height: 56px;
  background-color: ${(p) => (p.$side === "sell" ? "#cde9cd" : "#f8d4d5")};
`;

const Ratio = styled.div`
  flex-shrink: 0;
  height: 10px;
  background: linear-gradient(to right, #e23034 229px, #069706 229px);
`;

const DetailHead = styled.div`
  display: flex;
  align-items: center;
  flex-shrink: 0;
  gap: 25px;
  height: 65px;
  margin-top: 7px;
  padding: 0 0 3px 87px;
  background-color: #f4f4f4;
  color: #666;
  font-size: 41px;
  letter-spacing: 1px;
`;

const Deal = styled.div`
  display: flex;
  align-items: center;
  height: 66px;
  padding: 2px 5px 0 4px;
  font-size: 39px;
  letter-spacing: -1.9px;
  && .time {
    width: 103px;
    color: #505050;
  }
  && .qty {
    color: ${(p) => p.$color};
    letter-spacing: -1.5px;
  }
`;

const Social = styled.section`
  display: flex;
  justify-content: space-between;
  padding: 24px 35px 22px;
`;

const Barrage = styled.div`
  position: relative;
  display: flex;
  width: 602px;
  height: 81px;
`;

const BarrageSwitch = styled.div`
  position: relative;
  width: 116px;
  padding-left: 31px;
  border: 1px solid #e8e8e8;
  border-radius: 41px 0 0 41px;
  font-size: 38px;
  line-height: 75px;
  font-weight: 900;
  color: #555;
  svg {
    position: absolute;
    left: 58px;
    top: 41px;
  }
`;

const BarrageInput = styled.div`
  display: flex;
  align-items: center;
  justify-content: space-between;
  flex: 1;
  padding: 0 20px 2px 35px;
  border: 1px solid #e8e8e8;
  border-left: 0;
  border-radius: 0 41px 41px 0;
  background-color: #f4f4f4;
  color: #999;
  font-size: 38px;
  svg {
    margin-top: 12px;
  }
`;

const Vote = styled.div`
  display: flex;
  width: 373px;
`;

const VoteSide = styled.div`
  width: ${(p) => (p.$up ? 189 : 188)}px;
  height: 81px;
  margin-left: ${(p) => (p.$up ? 0 : -4)}px;
  padding-left: 19px;
  border-radius: ${(p) => (p.$up ? "41px 0 0 41px" : "0 41px 41px 0")};
  clip-path: ${(p) =>
    p.$up ? "polygon(0 0, 100% 0, 95% 100%, 0 100%)" : "polygon(5% 0, 100% 0, 100% 100%, 0 100%)"};
  background: ${(p) =>
    p.$up ? "linear-gradient(#feeae7, #fdd3cf)" : "linear-gradient(#d8f8e4, #a0ebbd)"};
  color: ${(p) => (p.$up ? "#e63b35" : "#169f4c")};
  font-size: 35px;
  line-height: 83px;
  letter-spacing: 0.5px;
  white-space: nowrap;
`;

const Banner = styled.section`
  display: flex;
  align-items: center;
  justify-content: space-between;
  height: 105px;
  margin: 0 15px 5px;
  padding: 0 37px 2px 42px;
  border-radius: 18px;
  background-color: #dbe9fa;
  color: #4b8fdd;
  font-size: 41px;
  white-space: nowrap;
`;

const Footer = styled.footer`
  flex: 1;
  background-color: #252525;
  color: #ddd;
`;

const Actions = styled.div`
  display: grid;
  grid-template-columns: 248px 208px 208px 208px 208px;
  height: 150px;
`;

const Sector = styled.div`
  display: flex;
  flex-direction: column;
  align-items: center;
  padding-top: 12px;
  color: #bbb;
  font-size: 31.5px;
  span {
    height: 48px;
    margin-top: 14px;
    line-height: 48px;
  }
  b {
    margin-top: 13px;
    font-size: 33px;
    line-height: 40px;
    font-weight: 400;
    letter-spacing: -0.6px;
    color: #2be62b;
  }
`;

const Action = styled.div`
  display: flex;
  flex-direction: column;
  align-items: center;
  padding-top: 21px;
  font-size: 31px;
  line-height: 50px;
`;

const SystemNav = styled.div`
  display: flex;
  align-items: center;
  gap: 198px;
  padding: 37px 0 0 281px;
  svg:last-child {
    margin-left: 3px;
  }
`;
